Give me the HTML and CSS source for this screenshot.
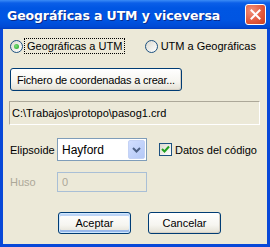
FILE: index.html
```html
<!DOCTYPE html>
<html lang="es">
<head>
  <meta charset="UTF-8" />
  <title>Geográficas a UTM y viceversa</title>
  <link rel="stylesheet" href="styles.css">
</head>
<body>
  <div class="window">
    <div class="titlebar">
      <span class="title">Geográficas a UTM y viceversa</span>
      <button class="close-btn" aria-label="Cerrar">
        <svg width="11" height="11" viewBox="0 0 11 11">
          <path d="M1.5 1.5 L9.5 9.5 M9.5 1.5 L1.5 9.5" stroke="#fff" stroke-width="2" stroke-linecap="square" fill="none" />
        </svg>
      </button>
    </div>

    <div class="content">
      <div class="radio-row">
        <label class="radio checked">
          <span class="radio-dot"></span>
          <span class="focus-label">Geográficas a UTM</span>
        </label>
        <label class="radio second">
          <span class="radio-dot"></span>
          <span>UTM a Geográficas</span>
        </label>
      </div>

      <button class="xp-btn file-btn">Fichero de coordenadas a crear...</button>

      <div class="path-field">C:\Trabajos\protopo\pasog1.crd</div>

      <div class="form-row">
        <span class="field-label">Elipsoide</span>
        <div class="combo">
          <span class="combo-text">Hayford</span>
          <span class="combo-arrow">
            <svg width="9" height="6" viewBox="0 0 9 6">
              <path d="M1 1 L4.5 4.5 L8 1" stroke="#4d6185" stroke-width="2" fill="none" />
            </svg>
          </span>
        </div>
        <label class="check">
          <span class="check-box">
            <svg width="9" height="9" viewBox="0 0 9 9">
              <path d="M1 4 L3.5 6.5 L8 1.5" stroke="#21a121" stroke-width="2" fill="none" />
            </svg>
          </span>
          <span>Datos del código</span>
        </label>
      </div>

      <div class="form-row huso-row">
        <span class="field-label disabled">Huso</span>
        <div class="text-input disabled">0</div>
      </div>

      <div class="actions">
        <button class="xp-btn default">Aceptar</button>
        <button class="xp-btn">Cancelar</button>
      </div>
    </div>
  </div>
</body>
</html>
```

FILE: styles.css
```css
body {
  margin: 0;
  font-family: Tahoma, 'Liberation Sans', Arial, sans-serif;
  font-size: 11px;
  color: #000;
}

.window {
  width: 270px;
  height: 247px;
  background: #0848d8;
  display: flex;
  flex-direction: column;
  box-sizing: border-box;
}

.titlebar {
  height: 29px;
  display: flex;
  align-items: center;
  padding: 0 4px 0 7px;
  background: linear-gradient(to bottom, #3b8cf6 0px, #0b5fe8 3px, #0056e3 8px, #0055e2 20px, #0049d4 27px, #003cc0 29px);
}

.title {
  color: #fff;
  font-family: 'DejaVu Sans', sans-serif;
  font-weight: bold;
  font-size: 12.5px;
  letter-spacing: -0.1px;
  text-shadow: 1px 1px 0 #0a2a8a;
  padding-top: 1px;
}

.close-btn {
  margin-left: auto;
  width: 21px;
  height: 21px;
  padding: 0;
  border: 1px solid #fff;
  border-radius: 3px;
  background: radial-gradient(circle at 30% 30%, #f2917a, #e0563a 60%, #c8401f);
  display: flex;
  align-items: center;
  justify-content: center;
}

.content {
  flex: 1;
  margin: 0 3px 3px 3px;
  background: #ece9d8;
  padding: 9px 6px 0 6px;
  display: flex;
  flex-direction: column;
  align-items: flex-start;
}

.radio-row {
  display: flex;
  align-items: center;
  height: 16px;
  width: 100%;
}

.radio {
  display: flex;
  align-items: center;
  gap: 3px;
}

.radio.second {
  margin-left: auto;
  margin-right: 5px;
}

.radio-dot {
  width: 11px;
  height: 11px;
  border: 1px solid #1c5180;
  border-radius: 50%;
  background: linear-gradient(135deg, #dcdad0, #fff);
  margin-left: 1px;
  position: relative;
}

.radio.checked .radio-dot::after {
  content: "";
  position: absolute;
  left: 3px;
  top: 3px;
  width: 5px;
  height: 5px;
  border-radius: 50%;
  background: radial-gradient(circle at 40% 40%, #7be07b, #21a121);
}

.focus-label {
  outline: 1px dotted #000;
  outline-offset: 1px;
  padding: 0 1px;
}

.xp-btn {
  font-family: inherit;
  font-size: 11px;
  color: #000;
  height: 23px;
  padding: 0 6px;
  white-space: nowrap;
  border: 1px solid #003c74;
  border-radius: 3px;
  background: linear-gradient(to bottom, #fff 0%, #f6f5f0 60%, #e3e0d4 100%);
  box-shadow: inset -1px -1px 0 #d6d0c5;
}

.file-btn {
  margin-top: 14px;
  margin-left: 1px;
  width: 172px;
  padding: 0;
  letter-spacing: -0.2px;
}

.path-field {
  margin-top: 10px;
  width: 251px;
  height: 24px;
  box-sizing: border-box;
  border-top: 1px solid #aca899;
  border-left: 1px solid #aca899;
  border-right: 1px solid #fff;
  border-bottom: 1px solid #fff;
  padding: 5px 0 0 2px;
  line-height: 13px;
}

.form-row {
  display: flex;
  align-items: center;
  margin-top: 13px;
  height: 23px;
  width: 100%;
}

.field-label {
  width: 47px;
  padding-left: 1px;
}

.field-label.disabled {
  color: #aca899;
}

.combo {
  width: 90px;
  height: 23px;
  box-sizing: border-box;
  border: 1px solid #7f9db9;
  background: #fff;
  display: flex;
  align-items: center;
  padding: 1px;
}

.combo-text {
  flex: 1;
  padding-left: 3px;
  font-size: 12px;
}

.combo-arrow {
  width: 17px;
  height: 19px;
  border-radius: 2px;
  background: linear-gradient(135deg, #d1deff, #b4c8f6);
  border: 1px solid #c4d2f5;
  box-sizing: border-box;
  display: flex;
  align-items: center;
  justify-content: center;
}

.check {
  display: flex;
  align-items: center;
  gap: 3px;
  margin-left: 12px;
}

.check-box {
  width: 13px;
  height: 13px;
  box-sizing: border-box;
  border: 1px solid #1c5180;
  background: linear-gradient(135deg, #dcdad0, #fff);
  display: flex;
  align-items: center;
  justify-content: center;
}

.huso-row {
  margin-top: 11px;
  height: 20px;
}

.text-input {
  width: 90px;
  height: 20px;
  box-sizing: border-box;
  border: 1px solid #a9bfd6;
  padding: 3px 0 0 4px;
  line-height: 13px;
}

.text-input.disabled {
  color: #aca899;
  background: #ece9d8;
}

.actions {
  display: flex;
  gap: 17px;
  margin-top: 20px;
  margin-left: 49px;
}

.actions .xp-btn {
  width: 73px;
  height: 22px;
}

.xp-btn.default {
  box-shadow: inset 0 0 0 1px #cee7ff, inset 0 -2px 0 1px #98b8ea, inset 0 2px 0 1px #bcd4f6;
}
```
